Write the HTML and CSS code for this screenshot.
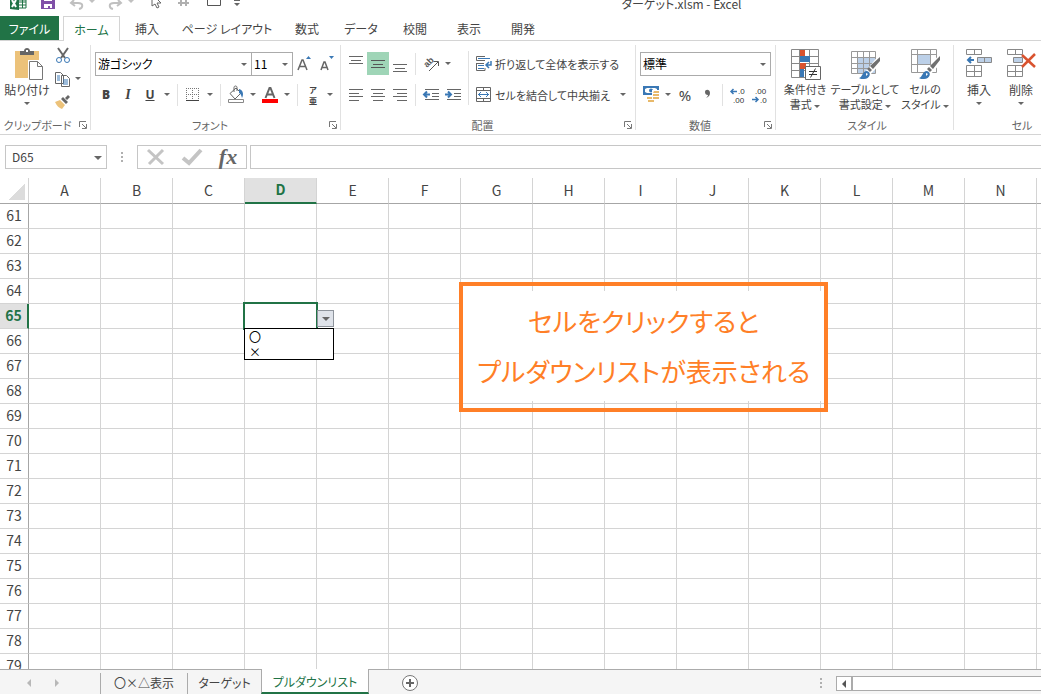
FILE: index.html
```html
<!DOCTYPE html>
<html lang="ja">
<head>
    <meta charset="UTF-8">
    <meta name="viewport" content="width=device-width, initial-scale=1.0">
    <title>ターゲット.xlsm - Excel</title>
    <link rel="stylesheet" href="styles.css">
</head>
<body>
    <header class="titlebar">
        <div class="quick">
            <svg width="30" height="16"><path d="M7 0h9v10l-9-1z" fill="#217346"/><path d="M9 0l4 7M13 0l-4 7" stroke="#fff" stroke-width="2"/><path d="M16 0h7v8h-7M16 2h7M16 5h7M19.500 0v8" fill="none" stroke="#217346"/></svg>
            <button class="quick-btn" aria-label="保存"><svg width="29" height="16"><path d="M8 0h14v9H8z" fill="#8050a8"/><path d="M11 0h8v1h-8zM11 4h8v4h-2V6h-2v2h-4z" fill="#fff"/></svg></button>
            <button class="quick-btn" aria-label="元に戻す"><svg width="40" height="16"><path d="M12 0l-3 3 4 3M9 3h7c6 0 5 5 1 6" fill="none" stroke="#c0c0c0" stroke-width="2"/><path d="M27 0h6l-3 3z" fill="#c0c0c0"/></svg></button>
            <button class="quick-btn" aria-label="やり直し"><svg width="40" height="16"><path d="M16 0l3 3-4 3M19 3h-7c-6 0-5 5-1 6" fill="none" stroke="#c0c0c0" stroke-width="2"/><path d="M26 0h6l-3 3z" fill="#c0c0c0"/></svg></button>
            <button class="quick-btn" aria-label="選択"><svg width="29" height="16"><path d="M10 0v6l3-2 2 4 2-1-2-4h4l-4-4" fill="#fff" stroke="#666"/></svg></button>
            <button class="quick-btn" aria-label="サイズ"><svg width="29" height="16"><path d="M7 3h11M10 0v6M15 0v6" fill="none" stroke="#b0b0b0" stroke-width="2"/></svg></button>
            <button class="quick-btn" aria-label="図形"><svg width="29" height="16"><path d="M7.500 0v5.500h13V0" fill="none" stroke="#555"/></svg></button>
            <button class="quick-btn" aria-label="その他"><svg width="16" height="16"><path d="M5 0h6v1H5zM5 3h6L8 6z" fill="#666"/></svg></button>
        </div>
        <h1 class="title">ターゲット.xlsm - Excel</h1>
    </header>

    <nav class="tabs">
        <button class="tab tab-file">ファイル</button>
        <button class="tab tab-active">ホーム</button>
        <button class="tab">挿入</button>
        <button class="tab tab-wide">ページ レイアウト</button>
        <button class="tab">数式</button>
        <button class="tab">データ</button>
        <button class="tab">校閲</button>
        <button class="tab">表示</button>
        <button class="tab">開発</button>
    </nav>

    <section class="ribbon">
        <!-- クリップボード -->
        <div class="group group-clipboard">
            <div class="group-body">
                <button class="big">
                    <svg width="32" height="32"><path d="M4 3h24v27H4z" fill="#ecc27a"/><path d="M9 3h4c0-4 6-4 6 0h4v4H9z" fill="#666"/><path d="M15 2h2v2h-2z" fill="#fff"/><path d="M17 12h15v20H17z" fill="#fff"/><path d="M18.500 13.500h8l5 5v13h-13zM26.500 13.500v5h5" fill="#fff" stroke="#777"/></svg>
                    <span>貼り付け</span><i class="caret"></i>
                </button>
                <div class="clip-tools">
                    <button class="icon" aria-label="切り取り"><svg width="16" height="16"><path d="M3 0l7 10M13 0L6 10" stroke="#666" stroke-width="2"/><circle cx="4" cy="12" r="2.500" fill="#fff" stroke="#3a78b5"/><circle cx="12" cy="12" r="2.500" fill="#fff" stroke="#3a78b5"/></svg></button>
                    <span class="pair"><button class="icon" aria-label="コピー"><svg width="16" height="16"><path d="M.5 1.500h5l3 3v8h-8zM6.500 4.500h5l3 3v8h-8z" fill="#fff" stroke="#666"/><path d="M2 5h3M2 7h3M2 9h3M8 9h5M8 11h5M8 13h5" stroke="#3a78b5"/></svg></button><button class="drop" aria-label="コピーのオプション"><i class="caret"></i></button></span>
                    <button class="icon" aria-label="書式のコピー"><svg width="16" height="16"><path d="M0 8l5-2 5 5-3 4c-3-1-5-3-7-7z" fill="#ecc27a"/><path d="M6 5l2-2 5 5-2 2zM10 4l3-3 2 2-3 3z" fill="#666"/></svg></button>
                </div>
            </div>
            <div class="group-label"><span>クリップボード</span><button class="launcher" aria-label="クリップボードの設定"><svg width="8" height="8"><path d="M.5 6V.5H7M3 3l4 4M7.500 3v4.500H3" fill="none" stroke="#777"/></svg></button></div>
        </div>

        <!-- フォント -->
        <div class="group group-font">
            <div class="group-body stack">
                <div class="row">
                    <label class="combo combo-font"><select aria-label="フォント"><option>游ゴシック</option></select></label>
                    <label class="combo combo-size"><select aria-label="フォント サイズ"><option>11</option></select></label>
                    <button class="icon" aria-label="拡大"><svg width="16" height="16"><path d="M2 14L6 4h1l4 10M4 10.500h5" fill="none" stroke="#666" stroke-width="1.500"/><path d="M10 3h5l-2.500-3z" fill="#3a78b5"/></svg></button>
                    <button class="icon" aria-label="縮小"><svg width="16" height="16"><path d="M3 14l3-8h1l3 8M4.500 11.500h4" fill="none" stroke="#666" stroke-width="1.500"/><path d="M11 0h5l-2.500 3z" fill="#3a78b5"/></svg></button>
                </div>
                <div class="row">
                    <button class="icon letter"><b>B</b></button>
                    <button class="icon letter letter-italic"><em>I</em></button>
                    <button class="icon letter"><u>U</u></button>
                    <button class="drop" aria-label="下線"><i class="caret"></i></button>
                    <span class="sep"></span>
                    <button class="icon" aria-label="罫線"><svg width="14" height="14"><path d="M.5 0v13M6.500 0v13M12.500 0v13M0 .5h13M0 6.500h13" stroke="#777" stroke-dasharray="1 1"/><path d="M0 12.500h13" stroke="#444"/></svg></button>
                    <button class="drop" aria-label="罫線の種類"><i class="caret"></i></button>
                    <span class="sep"></span>
                    <button class="icon" aria-label="塗りつぶし"><svg width="18" height="18"><path d="M3 7.500L9 2l5 5-6 6zM7 6V1.500c0-2 3-2 3 0V5" fill="#fff" stroke="#666"/><path d="M12 3c4 1 5 5 3 9-1-3-1-4-3-5z" fill="#3a78b5"/><path d="M1.500 13.500h15v3h-15z" fill="#fff" stroke="#888"/></svg></button>
                    <button class="drop" aria-label="塗りつぶしの色"><i class="caret"></i></button>
                    <button class="icon" aria-label="フォントの色"><svg width="16" height="16"><path d="M3.500 11L7.500 1h1l4 10M5 7.500h6" fill="none" stroke="#666" stroke-width="2"/><path d="M0 12h16v4H0z" fill="#f00"/></svg></button>
                    <button class="drop" aria-label="色"><i class="caret"></i></button>
                    <span class="sep"></span>
                    <button class="icon ruby"><span>ア</span><span>亜</span></button>
                    <button class="drop" aria-label="ふりがな"><i class="caret"></i></button>
                </div>
            </div>
            <div class="group-label"><span>フォント</span><button class="launcher" aria-label="フォントの設定"><svg width="8" height="8"><path d="M.5 6V.5H7M3 3l4 4M7.500 3v4.500H3" fill="none" stroke="#777"/></svg></button></div>
        </div>

        <!-- 配置 -->
        <div class="group group-align">
            <div class="group-body">
                <div class="stack">
                    <div class="row">
                        <button class="icon" aria-label="上揃え"><svg width="14" height="16"><path d="M0 .5h14M2 4.500h10M0 7.500h14" stroke="#666"/></svg></button>
                        <button class="icon icon-on" aria-label="上下中央揃え"><svg width="14" height="16"><path d="M0 4.500h14M2 8.500h10M0 11.500h14" stroke="#555"/></svg></button>
                        <button class="icon" aria-label="下揃え"><svg width="14" height="16"><path d="M0 8.500h14M2 12.500h10M0 15.500h14" stroke="#666"/></svg></button>
                        <span class="sep"></span>
                        <button class="icon" aria-label="方向"><svg width="18" height="18"><text x="0" y="0" transform="translate(5 13) rotate(-45)" class="glyph-ab">ab</text><path d="M7 16l9-9M11.500 6.500h5V11" fill="none" stroke="#555"/></svg></button>
                        <button class="drop" aria-label="方向の種類"><i class="caret"></i></button>
                    </div>
                    <div class="row">
                        <button class="icon" aria-label="左揃え"><svg width="14" height="12"><path d="M0 .5h14M0 4.500h10M0 7.500h14M0 11.500h10" stroke="#666"/></svg></button>
                        <button class="icon" aria-label="中央揃え"><svg width="14" height="12"><path d="M0 .5h14M2 4.500h10M0 7.500h14M2 11.500h10" stroke="#666"/></svg></button>
                        <button class="icon" aria-label="右揃え"><svg width="14" height="12"><path d="M0 .5h14M4 4.500h10M0 7.500h14M4 11.500h10" stroke="#666"/></svg></button>
                        <span class="sep"></span>
                        <button class="icon" aria-label="インデントを減らす"><svg width="16" height="12"><path d="M2 .5h14M9 4.500h7M9 7.500h7M2 10.500h14" stroke="#666"/><path d="M7 5.500H1M4 2.500l-3 3 3 3" fill="none" stroke="#3a78b5" stroke-width="2"/></svg></button>
                        <button class="icon" aria-label="インデントを増やす"><svg width="16" height="12"><path d="M2 .5h14M9 4.500h7M9 7.500h7M2 10.500h14" stroke="#666"/><path d="M0 5.500h6M3 2.500l3 3-3 3" fill="none" stroke="#3a78b5" stroke-width="2"/></svg></button>
                    </div>
                </div>
                <span class="sep sep-tall"></span>
                <div class="stack">
                    <div class="row">
                        <button class="text-btn"><svg width="16" height="16"><path d="M9 4.500H.5v-4H9M.5 7v7.500H9V12M.5 7.500H8" fill="none" stroke="#666"/><path d="M2 2.500h12M2 9.500h6M2 12.500h6" stroke="#3a78b5"/><path d="M15 5v4h-4M13 6l-3 3 3 3" fill="none" stroke="#3a78b5" stroke-width="1.500"/></svg><span>折り返して全体を表示する</span></button>
                    </div>
                    <div class="row">
                        <button class="text-btn text-btn-merge"><svg width="16" height="16"><path d="M.5.500h14v14H.5zM0 3.500h15M0 11.500h15M7.500 0v3.500M7.500 11.500v3" fill="none" stroke="#666"/><path d="M2 7.500h11M5 5L2.500 7.500 5 10M10 5l2.500 2.500L10 10" fill="none" stroke="#3a78b5"/></svg><span>セルを結合して中央揃え</span></button>
                        <button class="drop" aria-label="結合の種類"><i class="caret"></i></button>
                    </div>
                </div>
            </div>
            <div class="group-label"><span>配置</span><button class="launcher" aria-label="配置の設定"><svg width="8" height="8"><path d="M.5 6V.5H7M3 3l4 4M7.500 3v4.500H3" fill="none" stroke="#777"/></svg></button></div>
        </div>

        <!-- 数値 -->
        <div class="group group-number">
            <div class="group-body stack">
                <div class="row">
                    <label class="combo combo-format"><select aria-label="表示形式"><option>標準</option></select></label>
                </div>
                <div class="row">
                    <button class="icon" aria-label="通貨"><svg width="17" height="17"><path d="M0 0h16v9H0z" fill="#3a78b5"/><path d="M2 3l2-1h8l2 1v3l-2 1H4L2 6z" fill="#fff"/><circle cx="8" cy="4.500" r="2" fill="#3a78b5"/><path d="M9 4h8v13H4v-6h5z" fill="#fff"/><path d="M11 5h5v2h-6zM10 8h6v2h-6zM10 11h6v2h-6zM4 11h5v2H4zM5 14h6v2H5z" fill="#e8b96a"/></svg></button>
                    <button class="drop" aria-label="通貨の種類"><i class="caret"></i></button>
                    <button class="icon percent">%</button>
                    <button class="icon" aria-label="桁区切り"><svg width="8" height="16"><path d="M2 5c0-3 5-3 5 1 0 3-2 4-4 5 1-1 2-2 2-3-2 0-3-1-3-3z" fill="#666"/></svg></button>
                    <span class="sep"></span>
                    <button class="icon" aria-label="小数点以下を増やす"><svg width="16" height="16"><text x="8" y="7" class="glyph-num">.0</text><text x="3" y="16" class="glyph-num">.00</text><path d="M7 4.500H1M3.500 2L1 4.500 3.500 7" fill="none" stroke="#3a78b5" stroke-width="1.500"/></svg></button>
                    <button class="icon" aria-label="小数点以下を減らす"><svg width="16" height="16"><text x="3" y="7" class="glyph-num">.00</text><text x="8" y="16" class="glyph-num">.0</text><path d="M0 12.500h6M3.500 10L6 12.500 3.500 15" fill="none" stroke="#3a78b5" stroke-width="1.500"/></svg></button>
                </div>
            </div>
            <div class="group-label"><span>数値</span><button class="launcher" aria-label="数値の設定"><svg width="8" height="8"><path d="M.5 6V.5H7M3 3l4 4M7.500 3v4.500H3" fill="none" stroke="#777"/></svg></button></div>
        </div>

        <!-- スタイル -->
        <div class="group group-style">
            <div class="group-body">
                <button class="big">
                    <svg width="32" height="32"><path d="M2.500 1.500h27v28h-27zM2 8.500h28M2 15.500h28M2 22.500h28M10.500 1v28M20.500 1v28" fill="#fff" stroke="#888"/><path d="M11 2h5v6h-5zM11 15h6v6h-6z" fill="#d9532f"/><path d="M11 8h10v6H11zM11 21h4v8h-4z" fill="#3a78b5"/><path d="M16.500 18.500h15v13h-15z" fill="#fff" stroke="#666"/><path d="M20 23.500h8M20 26.500h8M26.500 20.500l-5 9" stroke="#333"/></svg>
                    <span>条件付き</span><span>書式 <i class="caret"></i></span>
                </button>
                <button class="big big-wide">
                    <svg width="32" height="32"><path d="M8 10h18v15H8z" fill="#bcd0e8"/><path d="M2.500 3.500h24v22h-24zM2 9.500h24M2 15.500h24M2 20.500h24M8.500 3v22M14.500 3v22M20.500 3v22" fill="none" stroke="#999"/><path d="M29 8l3 3v4L21 27l-4-4z" fill="#fff"/><path d="M31 9v4l-7 8-3-3zM20 19l3 3-2 2-3-3z" fill="#707070"/><path d="M10 30c4-1 3-7 8-7 5 1 3 8-3 8-2 0-4 0-5-1z" fill="#3a78b5"/><path d="M17 25l2 1-2 2z" fill="#fff"/></svg>
                    <span>テーブルとして</span><span>書式設定 <i class="caret"></i></span>
                </button>
                <button class="big">
                    <svg width="32" height="32"><path d="M8 7h14v9H8z" fill="#bcd0e8"/><path d="M2.500 1.500h25v23h-25zM2 6.500h25M2 16.500h25M8.500 1v23M21.500 1v23" fill="none" stroke="#999"/><path d="M29 8l3 3v4L21 27l-4-4z" fill="#fff"/><path d="M31 8v4l-7 9-3-3zM20 19l3 3-2 2-3-3z" fill="#707070"/><path d="M10 30c4-1 3-7 8-7 5 1 3 8-3 8-2 0-4 0-5-1z" fill="#3a78b5"/><path d="M17 25l2 1-2 2z" fill="#fff"/></svg>
                    <span>セルの</span><span>スタイル <i class="caret"></i></span>
                </button>
            </div>
            <div class="group-label"><span>スタイル</span></div>
        </div>

        <!-- セル -->
        <div class="group group-cells">
            <div class="group-body">
                <button class="big big-narrow">
                    <svg width="32" height="32"><path d="M3.500 1.500h15v5h-15zM11.500 1v5M3.500 17.500h15v11h-15zM11.500 17v11M3 23.500h15" fill="#fff" stroke="#888"/><path d="M14.500 9.500h14v5h-14z" fill="#bcd0e8" stroke="#888"/><path d="M21.500 9v5" stroke="#888"/><path d="M11 12H5M8 9l-3 3 3 3" fill="none" stroke="#3a78b5" stroke-width="2"/></svg>
                    <span>挿入</span><i class="caret"></i>
                </button>
                <button class="big big-narrow">
                    <svg width="32" height="32"><path d="M2.500 1.500h15v5h-15zM10.500 1v5M2.500 17.500h15v11h-15zM10.500 17v11M2 23.500h15" fill="#fff" stroke="#888"/><path d="M8.500 9.500h9v5h-9z" fill="#bcd0e8" stroke="#888"/><path d="M17 7l13 12M30 6L17 19" stroke="#d9532f" stroke-width="2.500"/></svg>
                    <span>削除</span><i class="caret"></i>
                </button>
            </div>
            <div class="group-label"><span>セル</span></div>
        </div>
    </section>

    <div class="formula-bar">
        <label class="combo combo-name"><select aria-label="名前ボックス"><option>D65</option></select></label>
        <span class="dots"></span>
        <div class="formula-tools">
            <button aria-label="キャンセル"><svg width="18" height="18"><path d="M1 2l15 14M16 2L2 16" fill="none" stroke="#c4c4c4" stroke-width="3"/></svg></button>
            <button aria-label="入力"><svg width="20" height="18"><path d="M1 10l6 5L19 2" fill="none" stroke="#c4c4c4" stroke-width="4"/></svg></button>
            <button class="fx">fx</button>
        </div>
        <input class="formula" type="text" aria-label="数式">
    </div>

    <main class="sheet">
        <table class="grid">
            <thead><tr id="columns"><th class="corner"></th></tr></thead>
            <tbody id="rows"></tbody>
        </table>
        <div class="callout">
            <p>セルをクリックすると<br>プルダウンリストが表示される</p>
        </div>
    </main>

    <footer class="sheet-tabs">
        <div class="sheet-nav">
            <button aria-label="前のシート"><i class="tri tri-left"></i></button>
            <button aria-label="次のシート"><i class="tri tri-right"></i></button>
        </div>
        <button class="sheet-tab sheet-tab-marks">〇×△表示</button>
        <button class="sheet-tab">ターゲット</button>
        <button class="sheet-tab sheet-tab-active">プルダウンリスト</button>
        <button class="add-sheet" aria-label="新しいシート"><svg width="16" height="16"><circle cx="8" cy="8" r="7.500" fill="#fff" stroke="#777"/><path d="M8 4v8M4 8h8" stroke="#666" stroke-width="2"/></svg></button>
        <span class="dots dots-scroll"></span>
        <div class="scrollbar">
            <button aria-label="左へスクロール"><i class="tri tri-left tri-dark"></i></button>
        </div>
    </footer>

    <script src="app.js"></script>
</body>
</html>
```
FILE: styles.css
```css
* {
    box-sizing: border-box;
}
body {
    margin: 0;
    height: 100vh;
    display: flex;
    flex-direction: column;
    overflow: hidden;
    background: #fff;
    color: #444;
    font-family: "Noto Sans CJK JP", sans-serif;
    font-size: 12px;
    font-feature-settings: "palt";
}
button, select, input {
    font: inherit;
    font-feature-settings: inherit;
    color: inherit;
    background: none;
    border: 0;
    border-radius: 0;
    margin: 0;
    padding: 0;
}
svg {
    display: block;
    flex: none;
    overflow: visible;
}

/* タイトルバー */
.titlebar {
    display: flex;
    flex: none;
    height: 16px;
    overflow: hidden;
}
.quick {
    display: flex;
    flex: none;
    width: 322px;
    padding-left: 3px;
}
.title {
    flex: 1;
    margin: 0;
    text-align: center;
    font-size: 12px;
    font-weight: normal;
    line-height: 8px;
}

/* タブ */
.tabs {
    display: flex;
    flex: none;
    height: 25px;
    border-bottom: 1px solid #d4d4d4;
}
.tab {
    width: 54px;
    height: 24px;
    white-space: nowrap;
}
.tab-file {
    width: 59px;
    margin-right: 4px;
    background: #217346;
    color: #fff;
}
.tab-active {
    width: 57px;
    height: 25px;
    border: 1px solid #d4d4d4;
    border-bottom: 0;
    background: #fff;
    color: #217346;
}
.tab-wide {
    width: 106px;
}

/* リボン */
.ribbon {
    display: flex;
    flex: none;
    height: 94px;
    border-bottom: 1px solid #d4d4d4;
}
.group {
    display: flex;
    flex-direction: column;
    flex: none;
    padding-left: 4px;
    position: relative;
}
.group::after {
    content: "";
    position: absolute;
    right: 0;
    top: 4px;
    bottom: 4px;
    border-right: 1px solid #e1e1e1;
}
.group-clipboard {
    width: 91px;
    padding-left: 0;
}
.group-font {
    width: 250px;
}
.group-align {
    width: 295px;
}
.group-number {
    width: 140px;
}
.group-style {
    width: 178px;
}
.group-cells {
    width: 132px;
}
.group-body {
    display: flex;
    height: 76px;
}
.stack {
    display: flex;
    flex-direction: column;
    gap: 8px;
    padding-top: 11px;
}
.row {
    display: flex;
    align-items: center;
    height: 23px;
}
.group-label {
    display: flex;
    align-items: center;
    height: 16px;
    color: #666;
    font-size: 11px;
}
.group-label span {
    flex: 1;
    text-align: center;
    white-space: nowrap;
}
.launcher {
    display: flex;
    justify-content: center;
    width: 16px;
}
.icon {
    display: flex;
    align-items: center;
    justify-content: center;
    flex: none;
    width: 22px;
    height: 23px;
}
.icon-on {
    background: #9fd5b7;
}
.letter {
    font-family: "Noto Sans", sans-serif;
    font-size: 12px;
    font-weight: bold;
}
.letter-italic {
    font-family: "Liberation Serif", serif;
    font-size: 14px;
}
.ruby {
    flex-direction: column;
    font-size: 8px;
    font-weight: bold;
    line-height: 11px;
}
.percent {
    font-family: "Noto Sans", sans-serif;
    font-size: 15px;
}
.drop {
    display: flex;
    align-items: center;
    justify-content: center;
    flex: none;
    width: 12px;
    height: 23px;
}
.caret {
    display: inline-block;
    border: 3px solid transparent;
    border-top-color: #666;
    border-bottom: 0;
    vertical-align: middle;
}
.sep {
    flex: none;
    width: 1px;
    height: 22px;
    margin: 0 4px;
    background: #e1e1e1;
}
.sep-tall {
    height: 54px;
    margin-top: 10px;
}
.text-btn {
    display: flex;
    align-items: center;
    gap: 3px;
    padding-left: 3px;
    font-size: 11px;
    white-space: nowrap;
}
.text-btn-merge {
    width: 144px;
}
.glyph-ab {
    font: bold 9px "Liberation Sans", sans-serif;
    fill: #555;
}
.glyph-num {
    font: 8px "Liberation Sans", sans-serif;
    fill: #333;
}
.big {
    display: flex;
    flex-direction: column;
    align-items: center;
    width: 50px;
    padding-top: 7px;
    line-height: 15px;
    white-space: nowrap;
}
.big svg {
    margin-bottom: 2px;
}
.big > .caret {
    margin-top: 5px;
}
.big-wide {
    width: 70px;
}
.group-style .big {
    font-size: 11px;
}
.big-narrow {
    width: 42px;
}
.group-clipboard .big {
    width: 54px;
}
.clip-tools {
    display: flex;
    flex-direction: column;
    padding-top: 3px;
}
.clip-tools .icon {
    width: 18px;
}
.pair {
    display: flex;
}
.combo {
    display: block;
    flex: none;
    height: 24px;
    border: 1px solid #ababab;
    position: relative;
}
.combo select {
    display: block;
    appearance: none;
    width: 100%;
    height: 100%;
    padding: 0 2px;
    color: #000;
}
.combo::after {
    content: "";
    position: absolute;
    right: 4px;
    top: 10px;
    border: 3px solid transparent;
    border-top-color: #666;
    border-bottom: 0;
    pointer-events: none;
}
.combo-font {
    width: 157px;
}
.combo-size {
    width: 41px;
    border-left: 0;
}
.combo-format {
    width: 131px;
}

/* 数式バー */
.formula-bar {
    display: flex;
    flex: none;
    height: 43px;
    padding: 10px 0 9px 5px;
}
.combo-name {
    width: 102px;
    border-color: #c6c6c6;
}
.combo-name select {
    padding: 0 6px 2px;
    color: #444;
}
.combo-name::after {
    border-width: 4px 4px 0;
}
.dots {
    flex: none;
    width: 2px;
    height: 10px;
    margin: 7px 14px;
    background: repeating-linear-gradient(#b0b0b0 0 2px, transparent 2px 4px);
}
.formula-tools {
    display: flex;
    flex: none;
    width: 110px;
    border: 1px solid #c6c6c6;
}
.formula-tools button {
    display: flex;
    flex: 1;
    align-items: center;
    justify-content: center;
}
.formula-tools .fx {
    color: #666;
    font: italic bold 22px/18px "Liberation Serif", serif;
}
.formula {
    flex: 1;
    min-width: 0;
    margin-left: 3px;
    padding: 0 6px;
    border: 1px solid #c6c6c6;
    border-right: 0;
}

/* シート */
.sheet {
    flex: 1;
    min-height: 0;
    overflow: hidden;
    position: relative;
}
.grid {
    table-layout: fixed;
    width: 1109px;
    border-collapse: separate;
    border-spacing: 0;
}
.grid th,
.grid td {
    width: 72px;
    height: 25px;
    padding: 0;
    border-right: 1px solid #d4d4d4;
    border-bottom: 1px solid #d4d4d4;
    font-size: 14px;
    font-weight: normal;
    line-height: 20px;
}
.grid th {
    padding-bottom: 2px;
}
.grid thead th {
    height: 26px;
    border-bottom-color: #a6a6a6;
}
.grid .corner {
    width: 29px;
    background: linear-gradient(135deg, transparent 50%, #dcdcdc 50%) 8px 5px / 17px 17px no-repeat;
}
.grid tbody th {
    border-right-color: #a6a6a6;
}
.grid .selected {
    background: #e1e1e1;
    color: #217346;
    font-weight: bold;
}
.grid thead .selected {
    border-bottom: 2px solid #217346;
}
.grid tbody .selected {
    border-right: 2px solid #217346;
}
.grid .cell-active {
    position: relative;
}
.cell-frame {
    position: absolute;
    top: -2px;
    right: -2px;
    bottom: -2px;
    left: -2px;
    border: 2px solid #217346;
}
.cell-drop {
    position: absolute;
    left: 72px;
    top: 6px;
    display: flex;
    align-items: center;
    justify-content: center;
    width: 17px;
    height: 17px;
    border: 1px solid #8e949c;
    background: #dfe3ea;
}
.cell-drop .caret {
    border-width: 4px 4px 0;
}
.cell-list {
    position: absolute;
    left: -1px;
    top: 24px;
    width: 90px;
    margin: 0;
    padding: 0 4px;
    border: 1px solid #000;
    background: #fff;
    color: #000;
    font-size: 12px;
    line-height: 15px;
    list-style: none;
    z-index: 1;
}
.callout {
    position: absolute;
    left: 459px;
    top: 104px;
    padding: 5px 0 7px;
    border: 4px solid #ff7f27;
}
.callout p {
    margin: 0;
    padding: 5px 14px;
    background: #fff;
    color: #ff7f27;
    font-size: 26px;
    line-height: 50px;
    text-align: center;
    white-space: nowrap;
}

/* シート見出し */
.sheet-tabs {
    display: flex;
    flex: none;
    height: 25px;
    background: #f5f5f5;
    box-shadow: inset 0 1px #ababab;
}
.sheet-nav {
    display: flex;
    flex: none;
    width: 100px;
    padding-left: 15px;
}
.sheet-nav button {
    width: 28px;
}
.tri {
    display: inline-block;
    border: 4px solid transparent;
}
.tri-left {
    border-left: 0;
    border-right-color: #b8b8b8;
}
.tri-right {
    border-right: 0;
    border-left-color: #b8b8b8;
}
.tri-dark {
    border-right-color: #555;
}
.sheet-tab {
    flex: none;
    width: 74px;
    height: 21px;
    margin-top: 4px;
    padding-bottom: 2px;
    border-left: 1px solid #ababab;
    white-space: nowrap;
}
.sheet-tab-marks {
    width: 87px;
}
.sheet-tab-active {
    width: 108px;
    height: 25px;
    margin-top: 0;
    padding: 2px 0 0;
    border-right: 1px solid #ababab;
    border-bottom: 2px solid #217346;
    background: #fff;
    color: #217346;
}
.add-sheet {
    margin-left: 33px;
    padding-top: 3px;
}
.dots-scroll {
    margin-left: auto;
    margin-top: 9px;
}
.scrollbar {
    flex: none;
    width: 205px;
    height: 15px;
    margin-top: 7px;
    border: 1px solid #ababab;
    border-right: 0;
    background: #fff;
}
.scrollbar button {
    display: flex;
    align-items: center;
    justify-content: center;
    width: 16px;
    height: 13px;
    border-right: 2px solid #ababab;
}
```
FILE: app.js
```js
const columns = 'ABCDEFGHIJKLMNO'.split('');
const firstRow = 61;
const lastRow = 80;
const active = { column: 'D', row: 65 };

const head = document.getElementById('columns');
columns.forEach(name => {
    const th = document.createElement('th');
    th.textContent = name;
    if (name === active.column) th.className = 'selected';
    head.appendChild(th);
});

const body = document.getElementById('rows');
for (let n = firstRow; n <= lastRow; n++) {
    const tr = document.createElement('tr');
    const th = document.createElement('th');
    th.textContent = n;
    if (n === active.row) th.className = 'selected';
    tr.appendChild(th);

    columns.forEach(name => {
        const td = document.createElement('td');
        if (n === active.row && name === active.column) {
            // 選択中のセルにプルダウンを付ける
            td.className = 'cell-active';
            td.innerHTML = `
                <div class="cell-frame"></div>
                <button class="cell-drop" aria-label="リストを開く"><i class="caret"></i></button>
                <ul class="cell-list"><li>〇</li><li>×</li></ul>`;
        }
        tr.appendChild(td);
    });
    body.appendChild(tr);
}
```
